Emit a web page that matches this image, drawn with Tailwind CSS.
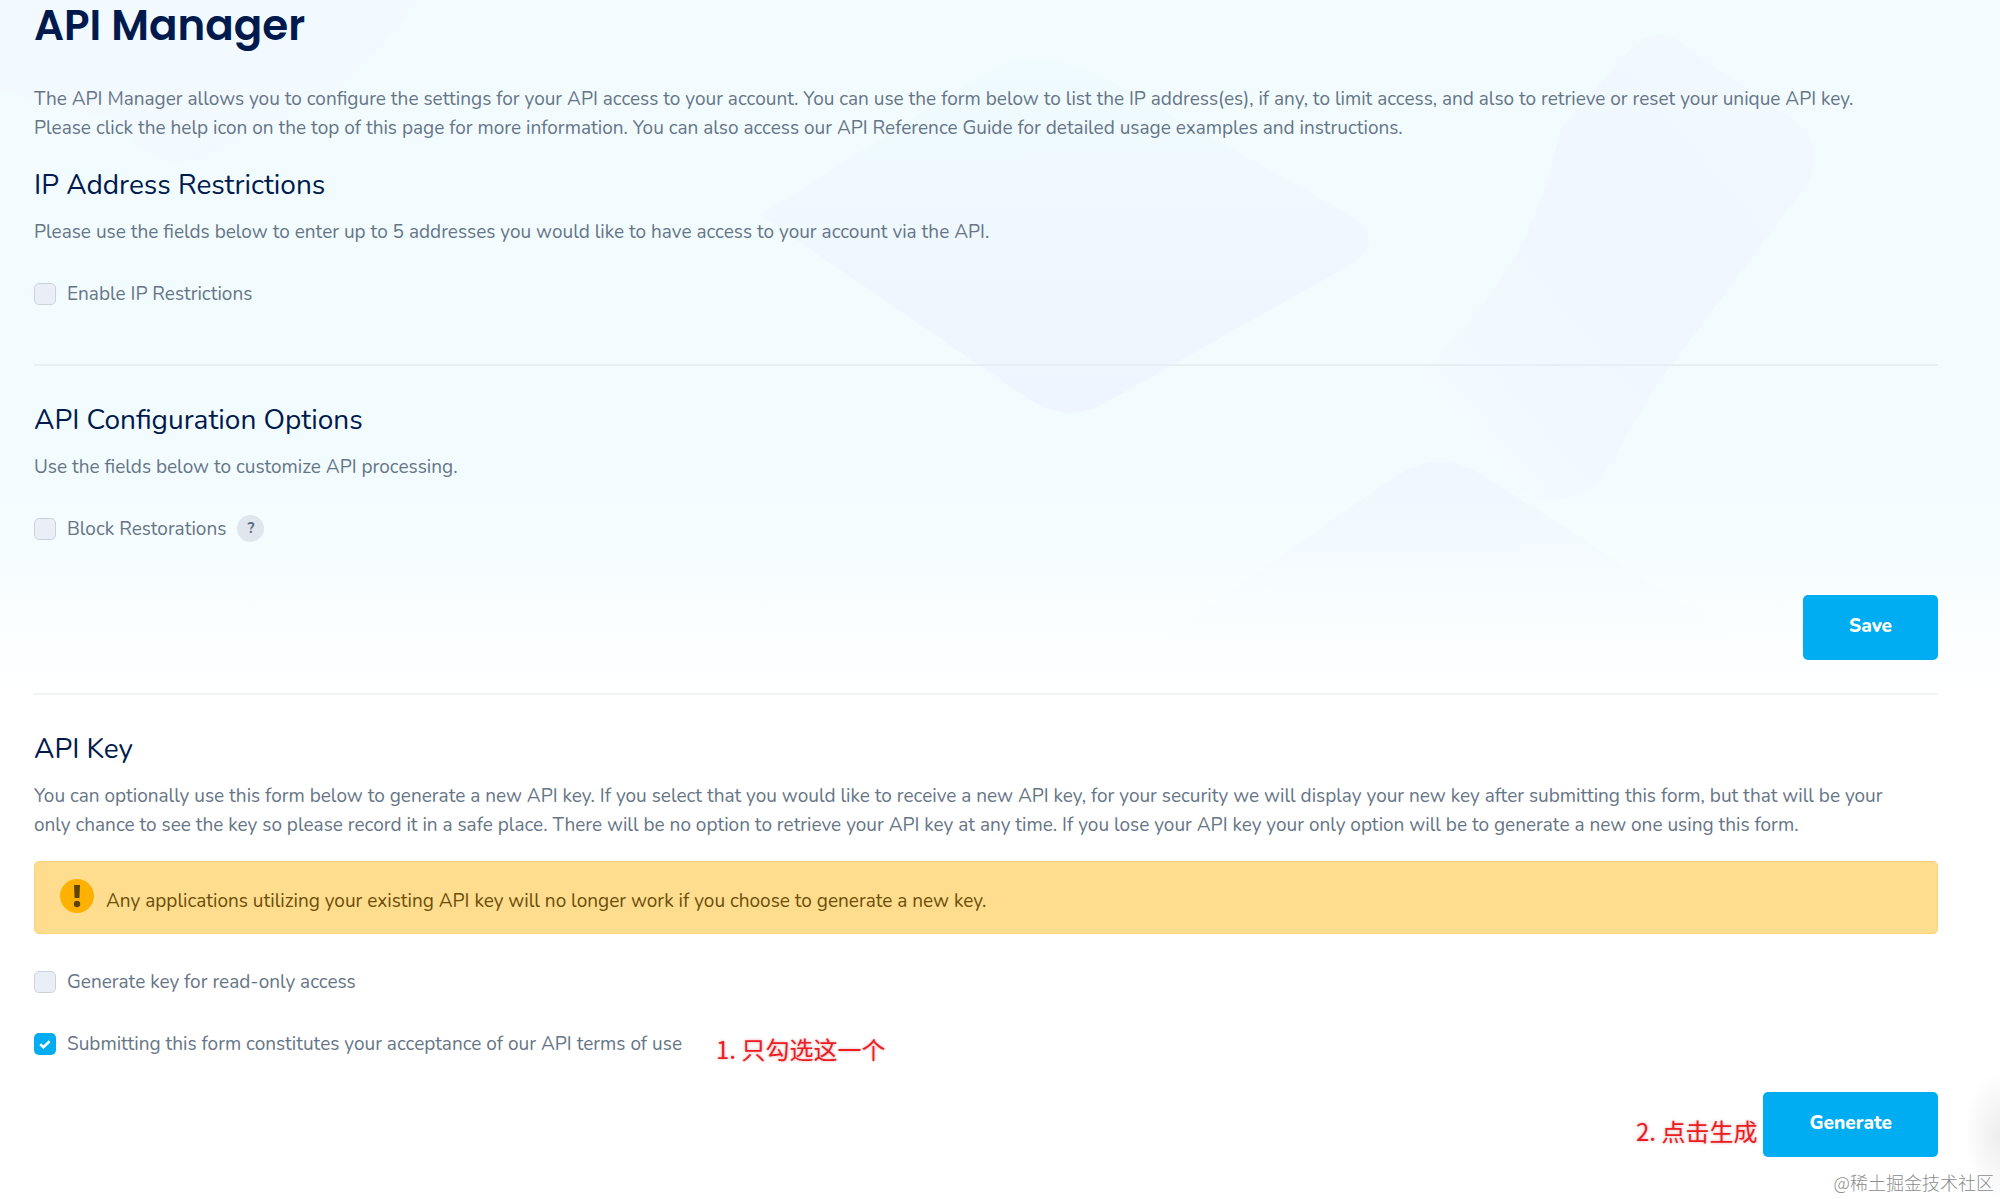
<!DOCTYPE html>
<html lang="en">
<head>
<meta charset="utf-8">
<meta name="viewport" content="width=device-width, initial-scale=1">
<title>API Manager</title>
<script src="https://cdn.jsdelivr.net/npm/@tailwindcss/browser@4"></script>
</head>
<body class="relative min-h-screen overflow-x-hidden bg-white font-['Nunito','Open_Sans','Noto_Sans_CJK_SC',sans-serif] text-[19px] leading-[29px] text-[#667586]">

<!-- Decorative page backdrop -->
<div class="absolute inset-x-0 top-0 h-[694px] bg-linear-to-b from-[#f2fcff] from-70% to-white" aria-hidden="true">
  <svg class="h-full w-full" viewBox="0 0 2000 694" preserveAspectRatio="none">
    <defs>
      <linearGradient id="peak" x1="0" y1="0" x2="0" y2="1">
        <stop offset="0" stop-color="#eef6ff"/>
        <stop offset="1" stop-color="#f6faff" stop-opacity="0"/>
      </linearGradient>
      <linearGradient id="diamond" x1="0" y1="0" x2="0" y2="1">
        <stop offset="0" stop-color="#effbfe"/>
        <stop offset="1" stop-color="#eff5fe"/>
      </linearGradient>
      <linearGradient id="slab" x1="0" y1="1" x2="1" y2="0">
        <stop offset="0" stop-color="#f2fcff"/>
        <stop offset="0.5" stop-color="#f0f7fe"/>
        <stop offset="1" stop-color="#f1f9fe"/>
      </linearGradient>
    </defs>
    <path d="M760 215 L990 70 Q1040 45 1100 75 L1350 215 Q1385 240 1355 262 L1110 400 Q1070 425 1030 400 Z" fill="url(#diamond)"/>
    <path d="M1630 50 Q1660 20 1690 50 L1800 125 Q1825 150 1810 180 L1660 380 L1600 480 Q1560 510 1530 495 L1420 370 Q1530 280 1560 130 Z" fill="url(#slab)"/>
    <path d="M1160 640 L1390 480 Q1440 445 1490 480 L1740 640 Z" fill="url(#peak)"/>
    <path d="M0 0 H420 L340 90 L190 160 Q150 170 120 120 L0 90 Z" fill="#f1f8ff" opacity=".8"/>
  </svg>
</div>
<div class="absolute right-0 bottom-0 h-32 w-9 bg-[radial-gradient(ellipse_at_right,#ededed,transparent_70%)]" aria-hidden="true"></div>

<main class="relative pr-[62px] pb-[42px] pl-[34px]">
  <h1 class="font-['Poppins','Inter',sans-serif] text-[42px] leading-[52px] font-semibold text-[#001a4d]">API Manager</h1>
  <p class="mt-[33px]">The API Manager allows you to configure the settings for your API access to your account. You can use the form below to list the IP address(es), if any, to limit access, and also to retrieve or reset your unique API key.<br>Please click the help icon on the top of this page for more information. You can also access our API Reference Guide for detailed usage examples and instructions.</p>

  <form>
    <section>
      <h2 class="mt-6 text-[28px] leading-[36px] text-[#001a4d]">IP Address Restrictions</h2>
      <p class="mt-[15px]">Please use the fields below to enter up to 5 addresses you would like to have access to your account via the API.</p>
      <label class="mt-[33px] flex items-center gap-[11px]">
        <input type="checkbox" class="-mt-0.5 size-[22px] appearance-none rounded-[5px] border border-[#ccd2dc] bg-[#e9eef7]">
        Enable IP Restrictions
      </label>
    </section>

    <section class="mt-[55px] border-t-2 border-[#e6eff3]">
      <h2 class="mt-[36px] text-[28px] leading-[36px] text-[#001a4d]">API Configuration Options</h2>
      <p class="mt-[15px]">Use the fields below to customize API processing.</p>
      <div class="mt-[33px] flex items-center gap-[11px]">
        <label class="flex items-center gap-[11px]">
          <input type="checkbox" class="-mt-0.5 size-[22px] appearance-none rounded-[5px] border border-[#ccd2dc] bg-[#e9eef7]">
          Block Restorations
        </label>
        <button type="button" aria-label="Help" class="-mt-1 -mb-0.5 size-[27px] rounded-full bg-[#dfe6ed] text-center text-[15px] leading-[25px] font-bold text-[#5c6b7e]">?</button>
      </div>
      <div class="mt-[51px] flex justify-end">
        <button type="submit" class="h-[65px] rounded-[5px] bg-[#00adf2] px-[46px] pb-[2px] font-extrabold text-white">Save</button>
      </div>
    </section>
  </form>

  <form class="mt-[33px] border-t-2 border-[#f0f2f4]">
    <h2 class="mt-[36px] text-[28px] leading-[36px] text-[#001a4d]">API Key</h2>
    <p class="mt-[15px]">You can optionally use this form below to generate a new API key. If you select that you would like to receive a new API key, for your security we will display your new key after submitting this form, but that will be your<br>only chance to see the key so please record it in a safe place. There will be no option to retrieve your API key at any time. If you lose your API key your only option will be to generate a new one using this form.</p>

    <div role="alert" class="mt-[21px] flex h-[73px] items-center gap-3 rounded-[5px] border border-[#fdd178] bg-[#ffdd8f] px-[25px] text-[#6b4e08]">
      <svg class="mb-1 size-[34px]" viewBox="0 0 34 34" aria-hidden="true">
        <circle cx="17" cy="17" r="17" fill="#ffb100"/>
        <path d="M14 6h6l-.6 13h-4.8z" fill="#5e4300"/>
        <circle cx="17" cy="25" r="3.2" fill="#5e4300"/>
      </svg>
      <span class="pt-2">Any applications utilizing your existing API key will no longer work if you choose to generate a new key.</span>
    </div>

    <label class="mt-[34px] flex items-center gap-[11px]">
      <input type="checkbox" class="-mt-0.5 size-[22px] appearance-none rounded-[5px] border border-[#ccd2dc] bg-[#e9eef7]">
      Generate key for read-only access
    </label>
    <div class="mt-[33px] flex items-center gap-[34px]">
      <label class="flex items-center gap-[11px]">
        <span class="relative -mt-0.5 flex">
          <input type="checkbox" checked class="size-[22px] appearance-none rounded-[5px] bg-[#00adf2]">
          <svg class="pointer-events-none absolute inset-0 size-[22px]" viewBox="0 0 22 22" fill="none" stroke="#fff" stroke-width="2.6" aria-hidden="true"><path d="M6.2 11.2l3.2 3 6.2-6"/></svg>
        </span>
        Submitting this form constitutes your acceptance of our API terms of use
      </label>
      <span class="-mb-2 font-['Noto_Sans_CJK_SC',sans-serif] text-2xl leading-[29px] text-[#ed1c24] text-shadow-[0_0_3px_#d8a0a0]">1. 只勾选这一个</span>
    </div>

    <div class="mt-[33px] flex items-center justify-end gap-1.5">
      <span class="pt-3 font-['Noto_Sans_CJK_SC',sans-serif] text-2xl leading-[29px] text-[#ed1c24] text-shadow-[0_0_3px_#d8a0a0]">2. 点击生成</span>
      <button type="submit" class="h-[65px] rounded-[5px] bg-[#00adf2] px-[46px] pb-[2px] font-extrabold text-white">Generate</button>
    </div>
  </form>
</main>

<div class="absolute right-[6px] bottom-[4px] font-['Noto_Sans_CJK_SC',sans-serif] text-lg leading-[26px] font-light text-[#8c8c8c]">@稀土掘金技术社区</div>
</body>
</html>
